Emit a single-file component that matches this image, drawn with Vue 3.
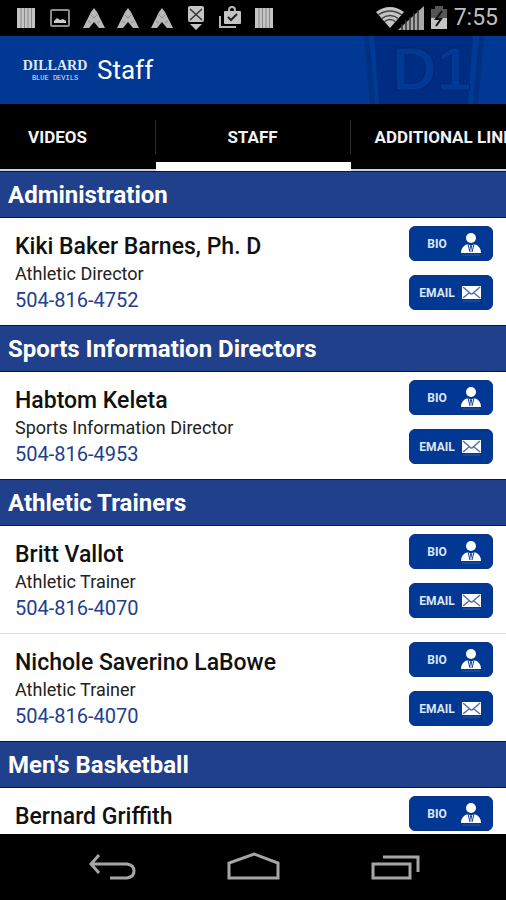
<template>
  <div class="screen">
    <!-- Status bar -->
    <div class="status-bar">
      <div class="status-left">
        <template v-for="(name, i) in notifications" :key="i">
          <svg v-if="name === 'bars'" class="status-icon" viewBox="0 0 24 24">
            <path d="M3 2h18v20H3z" fill="#c4c4c4" />
            <path d="M7 2v20M10.500 2v20M14 2v20M17.500 2v20" stroke="#888" stroke-width="1" />
          </svg>
          <svg v-else-if="name === 'image'" class="status-icon" viewBox="0 0 24 24">
            <rect x="3" y="4" width="18" height="16" rx="1" fill="none" stroke="#8c8c8c" stroke-width="2" />
            <path d="M6 17v-2l3-3 3 2 3-1 3 2v2z" fill="#ccc" />
          </svg>
          <svg v-else-if="name === 'arrow'" class="status-icon" viewBox="0 0 24 24">
            <path d="M12 2l3 4 8 16h-6l-5-6-5 6H1L9 6z" fill="#b8b8b8" />
            <path d="M9 9l3 3 3-3M6 15l3 2M18 15l-3 2" fill="none" stroke="#8a8a8a" />
          </svg>
          <svg v-else-if="name === 'badge'" class="status-icon" viewBox="0 0 24 24">
            <rect x="4" y="0" width="16" height="16" rx="2" fill="#c4c4c4" />
            <path d="M6 3l12 11M18 3L6 14" stroke="#333" stroke-width="1.500" />
            <path d="M6 18h12l-6 6z" fill="#c4c4c4" />
          </svg>
          <svg v-else class="status-icon" viewBox="0 0 24 24">
            <path d="M2 10v11h16" fill="none" stroke="#b5b5b5" stroke-width="2" />
            <circle cx="14" cy="4" r="3" fill="none" stroke="#b5b5b5" stroke-width="2" />
            <rect x="6" y="5" width="17" height="13" rx="1" fill="#c4c4c4" />
            <path d="M10 11l3 3 6-6" fill="none" stroke="#222" stroke-width="2" />
          </svg>
        </template>
      </div>
      <div class="status-right">
        <svg class="wifi" viewBox="0 0 28 22">
          <path d="M0 5Q14-5 28 5L14 21z" fill="#c4c4c4" />
          <path d="M2 8q12-8 24 0M5 12q9-7 18 0M8 15q6-5 12 0" fill="none" stroke="#444" stroke-width="1.500" />
        </svg>
        <svg class="signal" viewBox="0 0 26 24">
          <path d="M0 24L26 0v24z" fill="#a8a8a8" />
          <path d="M4 18v6M8 14v10M12 11v13M16 7v17M20 4v20" stroke="#333" stroke-width="1.500" />
        </svg>
        <svg class="battery" viewBox="0 0 16 24">
          <path d="M0 3h4V0h8v3h4v9H0z" fill="#555" />
          <path d="M0 12h16v11H0z" fill="#c4c4c4" />
          <path d="M11 5L5 13h5l-5 7" fill="none" stroke="#111" stroke-width="2" />
        </svg>
        <span class="clock">7:55</span>
      </div>
    </div>

    <!-- App bar -->
    <header class="app-bar">
      <div class="logo">
        <span class="logo-name">DILLARD</span>
        <span class="logo-sub">BLUE DEVILS</span>
      </div>
      <h1 class="page-title">Staff</h1>
      <svg class="emblem" viewBox="0 0 124 68" aria-hidden="true">
        <path d="M2 0h120l-6 68H8z" fill="#003080" />
        <path d="M7 0h110l-6 68H13z" fill="#003a94" />
        <path d="M12 0h99l-5 68H17z" fill="#002d84" />
        <text x="30" y="54" class="emblem-text">D1</text>
      </svg>
    </header>

    <!-- Tabs -->
    <nav class="tabs">
      <a
        v-for="tab in tabs"
        :key="tab"
        href="#"
        class="tab"
        :class="{ active: tab === activeTab }"
        @click.prevent="activeTab = tab"
      >
        <span class="tab-label">{{ tab }}</span>
      </a>
    </nav>

    <!-- Staff list -->
    <main class="staff-list">
      <section v-for="group in groups" :key="group.title">
        <h2 class="group-title">{{ group.title }}</h2>
        <div v-for="person in group.people" :key="person.name" class="person">
          <div class="person-info">
            <h3 class="person-name">{{ person.name }}</h3>
            <p v-if="person.role" class="person-role">{{ person.role }}</p>
            <a v-if="person.phone" class="person-phone" :href="`tel:${person.phone}`">{{ person.phone }}</a>
          </div>
          <div class="person-actions">
            <button type="button" class="action">
              <span class="action-label">BIO</span>
              <svg class="action-icon" viewBox="0 0 24 24">
                <circle cx="12" cy="6" r="5" fill="#fff" />
                <path d="M2 21q0-7 7-9l3 2 3-2q7 2 7 9z" fill="#fff" />
                <path d="M9 12l2 8M15 12l-2 8" stroke="#003893" stroke-width="1" />
                <path d="M11 14h2l-1 6z" fill="#003893" />
                <path d="M3 23h18" stroke="#2c58a6" stroke-width="1" />
              </svg>
            </button>
            <button type="button" class="action">
              <span class="action-label">EMAIL</span>
              <svg class="action-icon" viewBox="0 0 24 24">
                <rect x="3" y="5" width="19" height="13" fill="#fff" />
                <path d="M4 6l8 7h1l8-7M4 17l6-5M21 17l-6-5" fill="none" stroke="#5570a5" stroke-width="1.500" />
                <path d="M4 20h17" stroke="#2c58a6" stroke-width="1" />
              </svg>
            </button>
          </div>
        </div>
      </section>
    </main>

    <!-- System navigation -->
    <div class="nav-bar">
      <button type="button" class="nav-button" aria-label="Back">
        <svg class="nav-icon" viewBox="0 0 56 32">
          <path d="M15 4L7 13l8 9M7 13h36q7 1 7 7t-7 7H26" fill="none" stroke="#a6a6a6" stroke-width="3" />
        </svg>
      </button>
      <button type="button" class="nav-button" aria-label="Home">
        <svg class="nav-icon" viewBox="0 0 56 32">
          <path d="M4 27V12l25-9 24 9v15z" fill="none" stroke="#a6a6a6" stroke-width="3" />
        </svg>
      </button>
      <button type="button" class="nav-button" aria-label="Recent apps">
        <svg class="nav-icon" viewBox="0 0 56 32">
          <path d="M7 13h37v14H7zM17 6h35v15" fill="none" stroke="#a6a6a6" stroke-width="3" />
        </svg>
      </button>
    </div>
  </div>
</template>

<script setup>
import { ref } from 'vue'

const notifications = ['bars', 'image', 'arrow', 'arrow', 'arrow', 'badge', 'store', 'bars']

const tabs = ['VIDEOS', 'STAFF', 'ADDITIONAL LINKS']
const activeTab = ref('STAFF')

const groups = [
  {
    title: 'Administration',
    people: [
      { name: 'Kiki Baker Barnes, Ph. D', role: 'Athletic Director', phone: '504-816-4752' }
    ]
  },
  {
    title: 'Sports Information Directors',
    people: [
      { name: 'Habtom Keleta', role: 'Sports Information Director', phone: '504-816-4953' }
    ]
  },
  {
    title: 'Athletic Trainers',
    people: [
      { name: 'Britt Vallot', role: 'Athletic Trainer', phone: '504-816-4070' },
      { name: 'Nichole Saverino LaBowe', role: 'Athletic Trainer', phone: '504-816-4070' }
    ]
  },
  {
    title: "Men's Basketball",
    people: [
      { name: 'Bernard Griffith', role: '', phone: '' }
    ]
  }
]
</script>

<style>
body {
  background: #000;
}
</style>

<style scoped>
.screen {
  display: flex;
  flex-direction: column;
  height: 100vh;
  background: #000;
  font-family: Roboto, "Liberation Sans", sans-serif;
  overflow: hidden;
}

/* Status bar */
.status-bar {
  flex: none;
  display: flex;
  align-items: center;
  justify-content: space-between;
  height: 36px;
  padding: 0 8px 0 14px;
}

.status-left {
  display: flex;
  gap: 10px;
}

.status-icon {
  width: 24px;
  height: 24px;
}

.status-right {
  display: flex;
  align-items: center;
}

.wifi {
  width: 28px;
  height: 22px;
}

.signal {
  width: 26px;
  height: 24px;
  margin-left: -6px;
}

.battery {
  width: 16px;
  height: 24px;
  margin: 0 7px;
}

.clock {
  font-size: 23px;
  line-height: 36px;
  color: #bdbdbd;
}

/* App bar */
.app-bar {
  flex: none;
  display: flex;
  align-items: center;
  height: 68px;
  padding: 0 20px 0 22px;
  background: #003893;
  color: #fff;
}

.logo {
  display: flex;
  flex-direction: column;
  align-items: center;
  width: 66px;
  color: #dfe6f5;
}

.logo-name {
  font-family: "Liberation Serif", serif;
  font-size: 14px;
  line-height: 16px;
  font-weight: 700;
}

.logo-sub {
  font-family: "Liberation Mono", monospace;
  font-size: 7px;
  line-height: 8px;
}

.page-title {
  margin: 0 0 0 9px;
  font-size: 26px;
  line-height: 32px;
  font-weight: 400;
}

.emblem {
  width: 124px;
  height: 68px;
  margin-left: auto;
}

.emblem-text {
  font-family: "Liberation Sans", sans-serif;
  font-size: 62px;
  font-weight: 700;
  fill: #003a94;
  stroke: #00256f;
  stroke-width: 1px;
}

/* Tabs */
.tabs {
  flex: none;
  display: flex;
  justify-content: center;
  height: 67px;
  background: #000;
  overflow: hidden;
}

.tab {
  flex: none;
  box-sizing: border-box;
  width: 195px;
  padding: 16px 0 0;
  border-bottom: 2px solid #c9d0e4;
  color: #f2f2f2;
  font-size: 17px;
  font-weight: 700;
  text-align: center;
  text-decoration: none;
}

.tab-label {
  display: block;
  padding: 0 24px;
  border-right: 1px solid #2c2c2c;
  line-height: 34px;
  white-space: nowrap;
}

.tab.active {
  border-bottom: 9px solid #fff;
}

/* Staff list */
.staff-list {
  flex: 1;
  min-height: 0;
  background: #fff;
  overflow-y: auto;
  scrollbar-width: none;
}

.group-title {
  box-sizing: border-box;
  height: 47px;
  margin: 0;
  padding: 0 8px;
  border-top: 1px solid #00127a;
  border-bottom: 1px solid #00127a;
  background: #21408b;
  color: #fff;
  font-size: 24px;
  line-height: 47px;
  font-weight: 700;
}

.person {
  display: flex;
  justify-content: space-between;
  height: 107px;
  padding: 0 13px 0 15px;
}

.person + .person {
  border-top: 1px solid #e2e2e2;
}

.person-info {
  padding-top: 15px;
}

.person-name {
  margin: 0;
  color: #111;
  font-size: 23px;
  line-height: 28px;
  font-weight: 500;
}

.person-role {
  margin: 0;
  color: #222;
  font-size: 18px;
  line-height: 26px;
}

.person-phone {
  display: block;
  color: #21408b;
  font-size: 20px;
  line-height: 26px;
  text-decoration: none;
}

.person-actions {
  display: flex;
  flex-direction: column;
  gap: 14px;
  padding-top: 8px;
}

.action {
  display: flex;
  align-items: center;
  width: 84px;
  height: 35px;
  padding: 0 9px 0 5px;
  border: 1px solid #0a3285;
  border-radius: 6px;
  background: #003893;
  color: #dfe6f5;
  font-family: inherit;
  cursor: pointer;
}

.action-label {
  flex: 1;
  font-size: 12px;
  line-height: 16px;
  font-weight: 700;
  text-align: center;
}

.action-icon {
  flex: none;
  width: 24px;
  height: 24px;
}

/* System navigation */
.nav-bar {
  flex: none;
  display: flex;
  justify-content: center;
  height: 66px;
  background: #000;
}

.nav-button {
  display: flex;
  align-items: center;
  justify-content: center;
  width: 141px;
  padding: 0;
  border: 0;
  background: none;
}

.nav-icon {
  width: 56px;
  height: 32px;
}
</style>
